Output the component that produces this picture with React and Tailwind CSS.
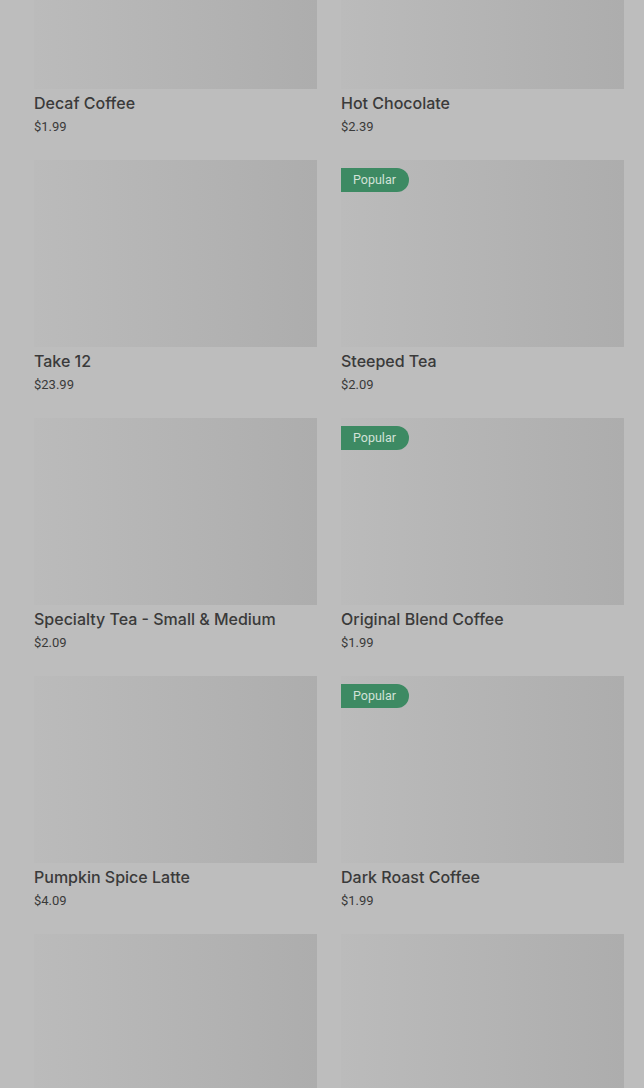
import React from "react";

const items = [
  { name: "Decaf Coffee", price: "$1.99", popular: false },
  { name: "Hot Chocolate", price: "$2.39", popular: false },
  { name: "Take 12", price: "$23.99", popular: false },
  { name: "Steeped Tea", price: "$2.09", popular: true },
  { name: "Specialty Tea - Small & Medium", price: "$2.09", popular: false },
  { name: "Original Blend Coffee", price: "$1.99", popular: true },
  { name: "Pumpkin Spice Latte", price: "$4.09", popular: false },
  { name: "Dark Roast Coffee", price: "$1.99", popular: true },
  { name: "", price: "", popular: false },
  { name: "", price: "", popular: false },
];

function Card({ item }) {
  return (
    <div className="flex flex-col">
      <div className="relative h-[187px] bg-linear-to-r from-[#bbbbbb] to-[#adadad]">
        {item.popular && (
          <div className="absolute left-0 top-[8px] h-[24px] pl-[12px] pr-[13px] flex items-center rounded-r-full bg-[#3d8a63] text-[12.5px] text-[#d2e2d8] leading-none">
            Popular
          </div>
        )}
      </div>
      <div
        className="mt-[2px] text-[16px] leading-[24px] font-medium text-[#3a3a3a]"
        style={{ fontFamily: "Inter, Roboto, sans-serif" }}
      >
        {item.name}
      </div>
      <div className="mt-[3px] text-[13px] leading-[18px] text-[#3a3a3a]">{item.price}</div>
    </div>
  );
}

export default function App() {
  return (
    <div
      className="h-[1088px] w-full overflow-hidden bg-[#bdbdbd]"
      style={{ fontFamily: "Roboto, 'Liberation Sans', sans-serif" }}
    >
      <div className="mt-[-98px] pl-[34px] pr-[20px] grid grid-cols-2 gap-x-[24px] gap-y-[24px]">
        {items.map((it, i) => (
          <Card key={i} item={it} />
        ))}
      </div>
    </div>
  );
}
